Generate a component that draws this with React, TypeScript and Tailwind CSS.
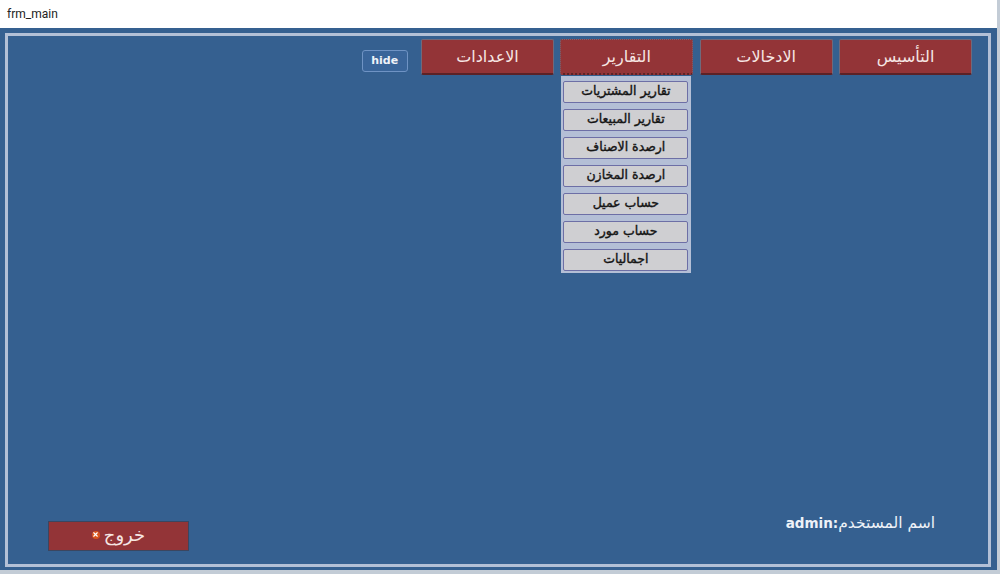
import { X } from "lucide-react";

const menuItems = [
  "الاعدادات",
  "التقارير",
  "الادخالات",
  "التأسيس",
];

const reportItems = [
  "تقارير المشتريات",
  "تقارير المبيعات",
  "ارصدة الاصناف",
  "ارصدة المخازن",
  "حساب عميل",
  "حساب مورد",
  "اجماليات",
];

const MenuButton = ({ label, active }: { label: string; active?: boolean }) => {
  return (
    <div className="relative">
      <button
        className={
          "h-[36px] w-[133px] rounded-[2px] border border-[#6f6a7c] border-b-2 border-b-[#5c2226] bg-[#933437] text-[16px] text-[#f6e6e4] " +
          (active ? "border-dotted border-[#3a3040]" : "")
        }
      >
        {label}
      </button>
      {active && (
        <div className="absolute left-[1px] top-[37px] flex h-[197px] w-[130px] flex-col gap-[6.5px] bg-[#b4bfd6] pl-[2px] pt-[5px]">
          {reportItems.map((item) => (
            <button
              key={item}
              className="h-[21.5px] w-[125px] shrink-0 rounded-[2px] border border-[#6d6fa6] bg-[#cfcfd2] text-[12.5px] text-[#151515] [-webkit-text-stroke:0.4px_#151515]"
            >
              {item}
            </button>
          ))}
        </div>
      )}
    </div>
  );
};

export default function App() {
  return (
    <div className="flex h-[574px] w-[1000px] flex-col bg-[#c3ccd6] font-['DejaVu_Sans',sans-serif]">
      <div className="flex h-[28px] w-[997px] items-center bg-white pl-[7px] font-['Roboto',sans-serif] text-[12px] text-[#222]">
        frm_main
      </div>
      <div className="h-[542px] w-[997px] bg-[#356090] pb-[3px] pl-[5px] pr-[6px] pt-[5px]">
        <div className="flex h-full flex-col justify-between border-[3px] border-[#b3c0d6] pb-[13px] pl-[40px] pr-[16px] pt-[3px]">
          <div className="flex items-start justify-end gap-[6.33px]">
            <button className="mr-[7px] mt-[11px] h-[22px] w-[46px] rounded-[3px] border border-[#6f93c4] bg-[#3a659a] text-[11px] font-bold text-[#eef2f8]">
              hide
            </button>
            {menuItems.map((item) => (
              <MenuButton key={item} label={item} active={item === "التقارير"} />
            ))}
          </div>
          <div className="flex items-end justify-between">
            <button className="flex h-[30px] w-[141px] items-center justify-center gap-[4px] border border-[#3b4660] bg-[#933437] pb-[3px] text-[18px] text-[#f6e6e4]">
              <span className="flex h-[8px] w-[8px] items-center justify-center rounded-full bg-[#d9541e]">
                <X className="h-[7px] w-[7px] text-white" strokeWidth={4} />
              </span>
              <span>خروج</span>
            </button>
            <div className="mb-[16px] mr-[37px] flex items-center text-[15.5px] text-[#eef2f8]">
              <span className="text-[13.5px] font-bold">admin:</span>
              <span>اسم المستخدم</span>
            </div>
          </div>
        </div>
      </div>
    </div>
  );
}
